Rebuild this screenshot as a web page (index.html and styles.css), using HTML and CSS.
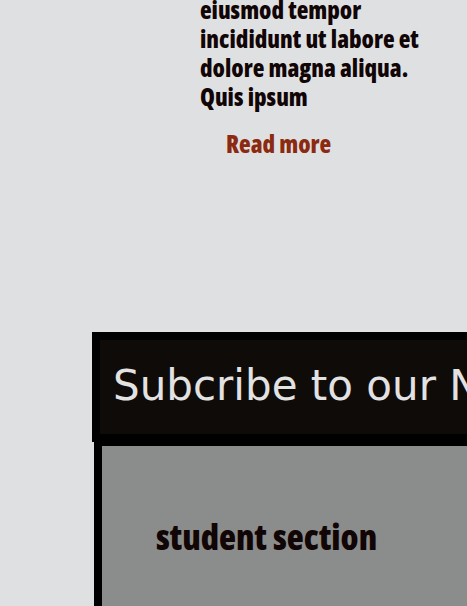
FILE: index.html
```html
<!DOCTYPE html>
<html lang="en">
<head>
    <meta charset="UTF-8">
    <meta name="viewport" content="width=device-width, initial-scale=1.0">
    <title>Student page</title>
    <link rel="stylesheet" href="styles.css">
</head>
<body>
    <section class="article">
        <p class="article-text">eiusmod tempor<br>incididunt ut labore et<br>dolore magna aliqua.<br>Quis ipsum</p>
        <a class="read-more" href="#">Read more</a>
    </section>

    <section class="subscribe">
        <div class="subscribe-inner">
            <h2 class="subscribe-title">Subcribe to our Newsletter</h2>
        </div>
    </section>

    <section class="student">
        <h3 class="student-title">student section</h3>
    </section>
</body>
</html>
```

FILE: styles.css
```css
html, body {
    margin: 0;
    padding: 0;
    overflow: hidden;
}
body {
    background-color: #dfe0e2;
    font-family: "Open Sans", sans-serif;
    font-stretch: 75%;
    color: #110505;
}
.article {
    padding-left: 200px;
    height: 337px;
}
.article-text {
    margin: -5px 0 0 0;
    font-size: 24px;
    font-weight: 800;
    line-height: 29px;
}
.read-more {
    display: inline-block;
    margin: 16px 0 0 26px;
    font-size: 24px;
    font-weight: 800;
    color: #8b2a10;
    text-decoration: none;
}
.subscribe {
    margin-left: 92px;
    width: 500px;
    border: 8px solid #000;
    background-color: #0f0b09;
}
.subscribe-inner {
    height: 94px;
    box-sizing: border-box;
    padding: 0 0 3px 13px;
    display: flex;
    align-items: center;
}
.subscribe-title {
    margin: 0;
    font-family: "DejaVu Sans", sans-serif;
    font-stretch: normal;
    font-weight: normal;
    font-size: 42px;
    color: #e2e2e2;
    white-space: nowrap;
}
.student {
    margin-left: 94px;
    width: 500px;
    height: 200px;
    border-left: 8px solid #000;
    border-top: 4px solid #000;
    background-color: #8a8d8b;
}
.student-title {
    margin: 0;
    padding: 67px 0 0 54px;
    font-size: 35px;
    font-weight: 800;
}
```
